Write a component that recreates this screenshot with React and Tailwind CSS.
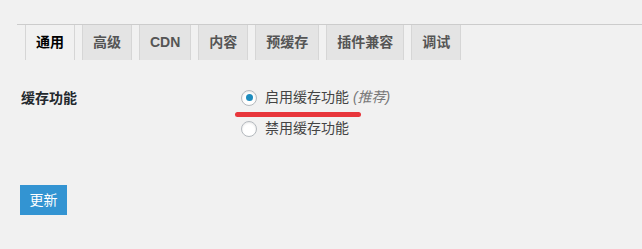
import { useState } from "react"

const tabs = ["通用", "高级", "CDN", "内容", "预缓存", "插件兼容", "调试"]

function Radio({ checked }) {
  return (
    <span className="flex h-4 w-4 items-center justify-center rounded-full border border-[#b4b9be] bg-white shadow-[inset_0_1px_2px_rgba(0,0,0,0.1)]">
      {checked && <span className="h-[7px] w-[7px] rounded-full bg-[#1e8cbe]" />}
    </span>
  )
}

export default function App() {
  const [active] = useState(0)
  const [cache] = useState(true)

  return (
    <div
      className="h-[249px] w-[642px] overflow-hidden bg-[#f1f1f1] pt-[24px] pl-[17px] text-[14px] text-[#444]"
      style={{ fontFamily: '"Liberation Sans", "Noto Sans CJK SC", sans-serif' }}
    >
      {/* tabs */}
      <div className="flex gap-[7px] border-t border-[#cccccc] pl-[8px]">
        {tabs.map((t, i) => (
          <div
            key={t}
            className={
              i === active
                ? "flex h-[35px] items-center border-x border-[#d6d6d6] bg-[#f1f1f1] px-[10px] font-semibold text-black"
                : "flex h-[35px] items-center border-x border-[#d6d6d6] bg-[#e4e4e4] px-[10px] font-semibold text-[#555]"
            }
          >
            {t}
          </div>
        ))}
      </div>

      {/* form */}
      <div className="relative mt-[27px] flex">
        <div className="w-[224px] pl-[4px] pt-[1px] font-bold text-[#23282d]">缓存功能</div>
        <div className="flex flex-col gap-[10px]">
          <label className="flex items-center gap-[8px]">
            <Radio checked={cache} />
            <span>
              启用缓存功能 <em className="text-[#777]">(推荐)</em>
            </span>
          </label>
          <label className="flex items-center gap-[8px]">
            <Radio checked={!cache} />
            <span>禁用缓存功能</span>
          </label>
        </div>
        {/* red marker annotation */}
        <div className="absolute left-[218px] top-[25px] h-[5px] w-[126px] rounded-full bg-[#e8363b]" />
      </div>

      <button className="mt-[46px] ml-[3px] h-[30px] w-[47px] bg-[#3394d2] text-[14px] text-white">
        更新
      </button>
    </div>
  )
}
